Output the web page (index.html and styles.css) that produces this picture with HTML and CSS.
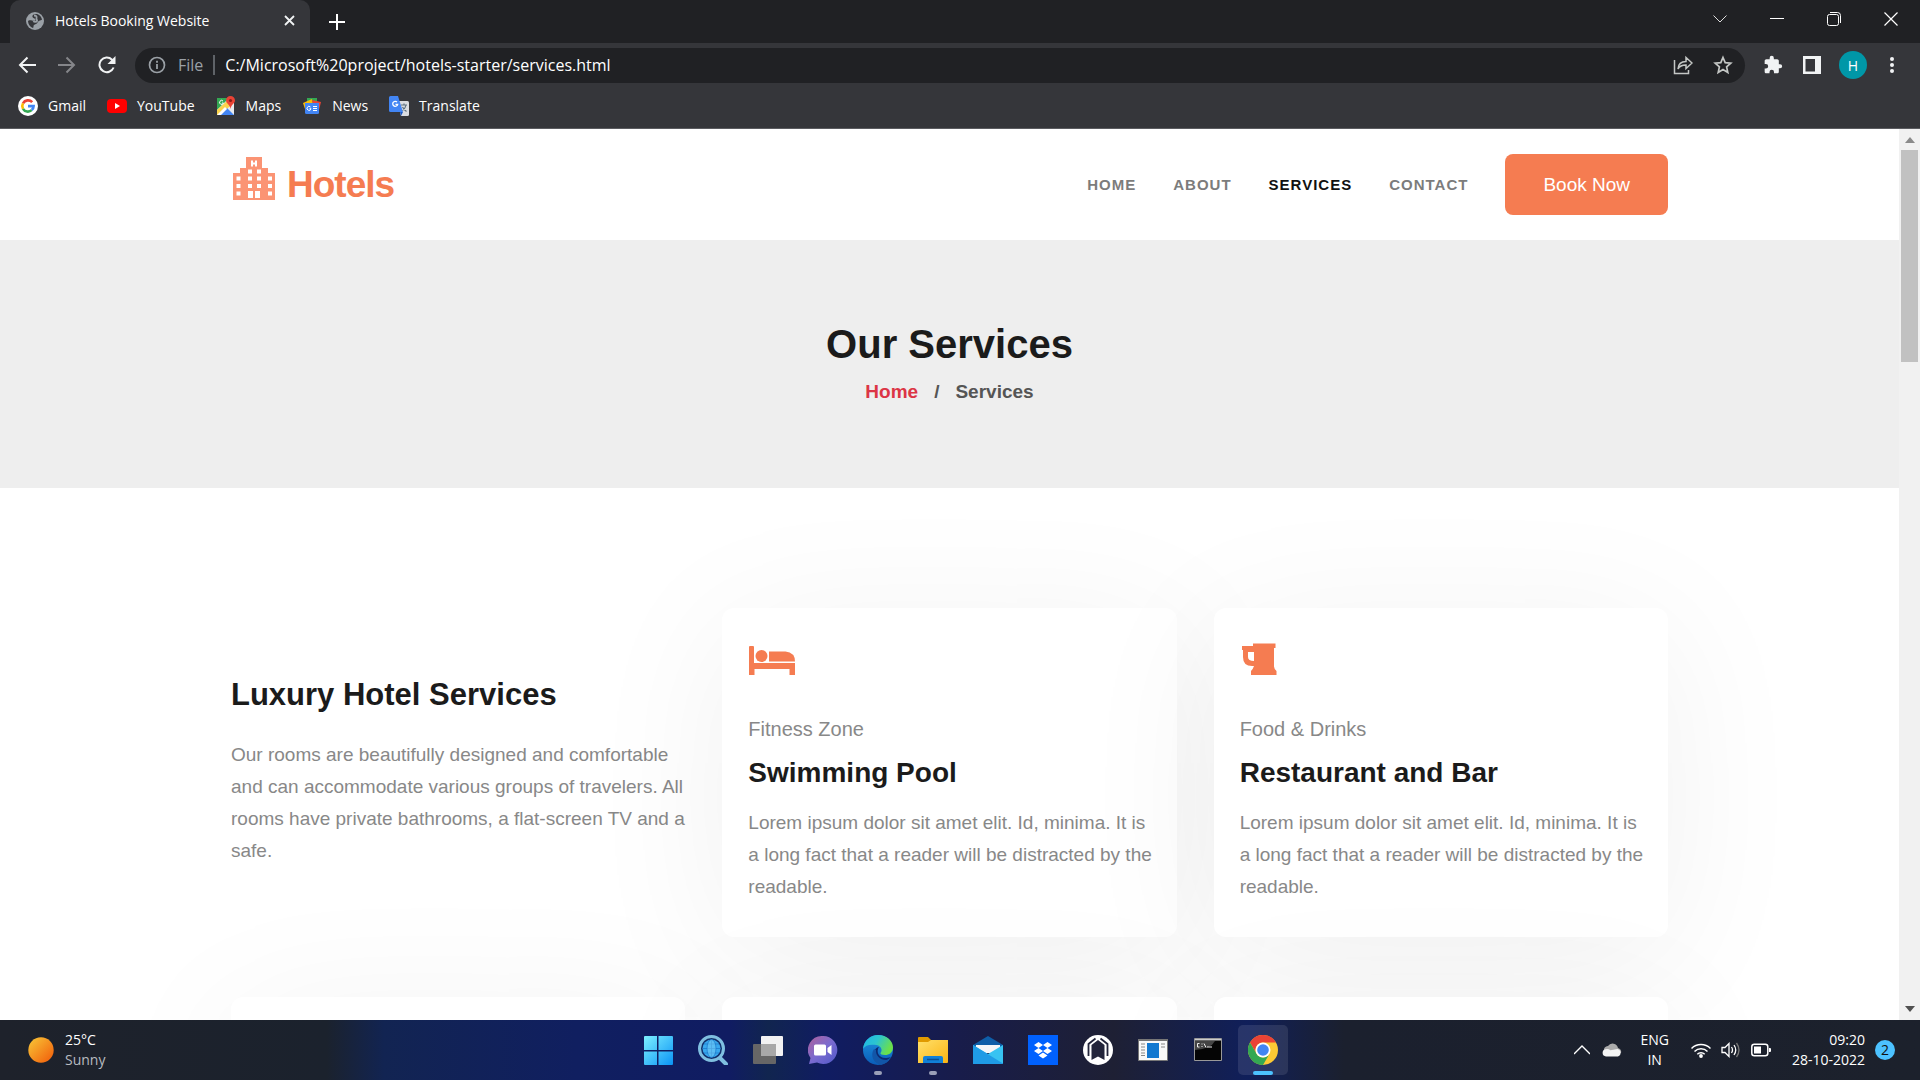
FILE: index.html
```html
<!DOCTYPE html>
<html lang="en">
<head>
<meta charset="utf-8">
<title>Hotels Booking Website</title>
<link rel="stylesheet" href="styles.css">
</head>
<body>
<div class="browser">
  <div class="tabstrip">
    <div class="tab">
      <svg class="tab-icon" viewBox="0 0 18 18"><circle cx="9" cy="9" r="9" fill="#9aa0a6"/><path d="M10 2C7 2 6 3.500 6.500 5S9 6 9.500 7.500 7.500 9 6 8.500 2.500 8 2 9c0 3 2 6 5 7 1-1 0-2 1-3s3-1 3.500-2.500S13 9 14 8.500s2-.5 2-1C15.500 4.500 13 2 10 2z" fill="#35363a"/><path d="M8 3.500c2 0 3 1 2.500 2.500s1 2 .5 3-3 1-3.500 0" fill="none" stroke="#9aa0a6" stroke-width="1.800"/></svg>
      <span class="tab-title">Hotels Booking Website</span>
      <button class="icon-btn" aria-label="Close tab"><svg width="11" height="11" viewBox="0 0 11 11"><path d="M1 1l9 9M10 1l-9 9" stroke="#f1f3f4" stroke-width="1.800"/></svg></button>
    </div>
    <button class="icon-btn new-tab" aria-label="New tab"><svg width="16" height="16" viewBox="0 0 16 16"><path d="M8 0v16M0 8h16" stroke="#fff" stroke-width="2"/></svg></button>
    <div class="window-controls">
      <button class="icon-btn" aria-label="Search tabs"><svg width="14" height="14" viewBox="0 0 14 14"><path d="M.5 3.500l6.500 6.500 6.500-6.500" fill="none" stroke="#ddd"/></svg></button>
      <button class="icon-btn" aria-label="Minimize"><svg width="14" height="14" viewBox="0 0 14 14"><path d="M0 6.500h14" stroke="#fff"/></svg></button>
      <button class="icon-btn" aria-label="Restore"><svg width="14" height="14" viewBox="0 0 14 14"><g fill="none" stroke="#fff"><rect x=".5" y="2.500" width="11" height="11" rx="2"/><path d="M3 .5h7.500a3 3 0 0 1 3 3V11"/></g></svg></button>
      <button class="icon-btn" aria-label="Close"><svg width="14" height="14" viewBox="0 0 14 14"><path d="M.5.5l13 13M13.500.5l-13 13" stroke="#fff" stroke-width="1.200"/></svg></button>
    </div>
  </div>
  <div class="toolbar">
    <div class="nav-buttons">
      <button class="icon-btn" aria-label="Back"><svg width="18" height="18" viewBox="0 0 18 18"><path d="M18 9H2M9.500 1.500L2 9l7.500 7.500" fill="none" stroke="#f1f3f4" stroke-width="2"/></svg></button>
      <button class="icon-btn" aria-label="Forward"><svg width="18" height="18" viewBox="0 0 18 18"><path d="M0 9h16M8.500 1.500L16 9l-7.500 7.500" fill="none" stroke="#85868a" stroke-width="2"/></svg></button>
      <button class="icon-btn" aria-label="Reload"><svg width="18" height="18" viewBox="0 0 18 18"><path d="M15.600 11.500A7.300 7.300 0 1 1 14 3.700L16 6" fill="none" stroke="#f1f3f4" stroke-width="2"/><path d="M17.500 0v8h-8z" fill="#f1f3f4"/></svg></button>
    </div>
    <div class="omnibox">
      <svg width="18" height="18" viewBox="0 0 18 18"><circle cx="9" cy="9" r="7.500" fill="none" stroke="#9aa0a6" stroke-width="1.700"/><path d="M9 8v5M9 4.700v2" stroke="#9aa0a6" stroke-width="1.800"/></svg>
      <label class="scheme" for="url">File</label>
      <input class="url" id="url" type="text" value="C:/Microsoft%20project/hotels-starter/services.html">
      <button class="icon-btn" aria-label="Share"><svg width="20" height="20" viewBox="0 0 20 20"><g fill="none" stroke="#c4c7c5" stroke-width="1.500"><path d="M1.500 5v13.500h14V15"/><path d="M5 14c.3-5 3-7.500 8-7.500V2.500L19 8l-6 5.500V10c-4 0-6.500 1-8 4z"/></g></svg></button>
      <button class="icon-btn" aria-label="Bookmark"><svg width="20" height="20" viewBox="0 0 20 20"><path d="M10 2.500l2.200 5.200 5.600.5-4.200 3.700 1.200 5.500-4.800-2.900-4.800 2.900 1.200-5.500L2.200 8.200l5.600-.5z" fill="none" stroke="#c4c7c5" stroke-width="1.700"/></svg></button>
    </div>
    <div class="tool-actions">
      <button class="icon-btn extensions" aria-label="Extensions"><svg width="20" height="20" viewBox="0 0 24 24"><path fill="#f1f3f4" d="M20.500 11H19V7c0-1.100-.9-2-2-2h-4V3.500a2.500 2.500 0 0 0-5 0V5H4c-1.100 0-2 .9-2 2v3.800h1.500a2.700 2.700 0 0 1 0 5.400H2V20c0 1.100.9 2 2 2h3.800v-1.500a2.700 2.700 0 0 1 5.400 0V22H17c1.100 0 2-.9 2-2v-4h1.500a2.500 2.500 0 0 0 0-5z"/></svg></button>
      <button class="icon-btn" aria-label="Side panel"><svg width="18" height="18" viewBox="0 0 18 18"><path fill="#f1f3f4" fill-rule="evenodd" d="M0 0h18v18H0zM2.500 3v12.500H12V3z"/></svg></button>
      <button class="avatar">H</button>
      <button class="icon-btn" aria-label="Menu"><svg width="4" height="18" viewBox="0 0 4 18"><g fill="#f1f3f4"><circle cx="2" cy="3" r="2"/><circle cx="2" cy="9" r="2"/><circle cx="2" cy="15" r="2"/></g></svg></button>
    </div>
  </div>
  <nav class="bookmarks" aria-label="Bookmarks">
    <a href="#"><svg width="20" height="20" viewBox="0 0 20 20"><circle cx="10" cy="10" r="10" fill="#fff"/><g fill="none" stroke-width="2.600"><path d="M14.200 6.200A5.700 5.700 0 0 0 5 7.300" stroke="#ea4335"/><path d="M5 7.300a5.700 5.700 0 0 0 0 5.500" stroke="#fbbc05"/><path d="M5 12.800a5.700 5.700 0 0 0 8.700 1.300" stroke="#34a853"/><path d="M13.700 14.100a5.500 5.500 0 0 0 1.900-4H10" stroke="#4285f4"/></g></svg>Gmail</a>
    <a href="#"><svg width="20" height="20" viewBox="0 0 20 20"><rect y="3" width="20" height="14" rx="4" fill="#f00"/><path d="M8 7v6l5-3z" fill="#fff"/></svg>YouTube</a>
    <a href="#"><svg width="20" height="20" viewBox="0 0 20 20"><path d="M1 2h17v17H1z" fill="#e8eaed"/><path d="M1 2h12L1 14z" fill="#34a853"/><path d="M1 19V14L11 5l4 4L5 19z" fill="#fbd34c"/><path d="M4 19l7-7 7 7z" fill="#4285f4"/><path d="M1 19l8-8 2 2-6 6z" fill="#fff"/><path d="M14.500 0A4.500 4.500 0 0 0 10 4.500c0 3 4 4 4.500 8.500.5-4.500 4.500-5.500 4.500-8.500A4.500 4.500 0 0 0 14.500 0z" fill="#ea4335"/><circle cx="14.500" cy="4.500" r="1.600" fill="#8c1d18"/><path d="M7 5a2 2 0 1 0 .5 2H6" fill="none" stroke="#fff"/></svg>Maps</a>
    <a href="#"><svg width="20" height="20" viewBox="0 0 20 20"><path d="M5 2h10v6H5z" fill="#34a853"/><path d="M1 7l9-4 1 6-8 4z" fill="#fbbc05"/><path d="M10 4l9 2-2 8h-5z" fill="#ea4335"/><path d="M3 7h14v9.500a1.500 1.500 0 0 1-1.500 1.500h-11A1.500 1.500 0 0 1 3 16.500z" fill="#4285f4"/><path d="M8.500 11a2 2 0 1 0 .5 1.700H7.500M11 10.500h4M11 12.500h4M11 14.500h4" fill="none" stroke="#fff"/></svg>News</a>
    <a href="#"><svg width="20" height="20" viewBox="0 0 20 20"><path d="M8 5h10.500A1.500 1.500 0 0 1 20 6.500v12a1.500 1.500 0 0 1-1.500 1.500H12z" fill="#dadce0"/><path d="M1.500 0H9l5 16H1.500A1.500 1.500 0 0 1 0 14.500v-13A1.500 1.500 0 0 1 1.500 0z" fill="#4285f4"/><path d="M11 16h3l-2 4z" fill="#1a56c4"/><path d="M8 6a2.500 2.500 0 1 0 .7 2.300H6.500" fill="none" stroke="#fff" stroke-width="1.300"/><path d="M12 9h6M15 7.500V9M17 9c-.5 3-2 4.500-3.500 5.500M13.500 11c1 2 2 3 4 4.500" fill="none" stroke="#5f7280" stroke-width="1.200"/></svg>Translate</a>
  </nav>
</div>

<div class="viewport">
  <div class="page">
    <header class="site-header">
      <div class="container header-row">
        <a class="brand" href="#">
          <svg width="44" height="44" viewBox="-1 0 44 44"><path fill="#fb9474" fill-rule="evenodd" d="M14 0h16v11h6v5h7v27H1V16h7v-5h6zM19 3.500v6h2v-2h2v2h2v-6h-2v2h-2v-2zM16 12.500v4h4v-4zM25 12.500v4h4v-4zM4.500 19.500v4h4v-4zM16 19.500v4h4v-4zM25 19.500v4h4v-4zM36 19.500v4h4v-4zM4.500 27v4h4v-4zM16 27v4h4v-4zM25 27v4h4v-4zM36 27v4h4v-4zM4.500 34.500v4h4v-4zM36 34.500v4h4v-4zM16 34v7h5v-7zM23 34v7h5v-7z"/></svg>
          <span>Hotels</span>
        </a>
        <nav class="menu" aria-label="Main">
          <a href="#">HOME</a>
          <a href="#">ABOUT</a>
          <a class="active" href="#">SERVICES</a>
          <a href="#">CONTACT</a>
          <button class="book">Book Now</button>
        </nav>
      </div>
    </header>
    <section class="hero">
      <h1>Our Services</h1>
      <p class="crumbs"><a href="#">Home</a><span>/</span><span>Services</span></p>
    </section>
    <main class="container services">
      <div class="intro">
        <h2>Luxury Hotel Services</h2>
        <p>Our rooms are beautifully designed and comfortable and can accommodate various groups of travelers. All rooms have private bathrooms, a flat-screen TV and a safe.</p>
      </div>
      <article class="card">
        <svg class="card-icon" viewBox="0 0 48 34"><path fill="#f57c51" d="M1 4q0-1 1-1h3q1 0 1 1v16h41v12h-5.500v-6H6.500v6H1z"/><circle cx="13.500" cy="13" r="6" fill="#f57c51"/><path fill="#f57c51" d="M21 8.500h16.500q9.500 1 9.500 10H21z"/><path d="M6.500 19.500H48" stroke="#fff"/></svg>
        <p class="kicker">Fitness Zone</p>
        <h3>Swimming Pool</h3>
        <p class="text">Lorem ipsum dolor sit amet elit. Id, minima. It is a long fact that a reader will be distracted by the readable.</p>
      </article>
      <article class="card">
        <svg class="card-icon" viewBox="0 0 48 34"><path fill="#f57c51" fill-rule="evenodd" d="M2 3h11V.5h22.500V5H34v18.500q0 2 2.500 4.500v4H11v-4q2-2 3-5-11 1-11-9V7H2zM8 9v5q0 4 6 4V9z"/></svg>
        <p class="kicker">Food &amp; Drinks</p>
        <h3>Restaurant and Bar</h3>
        <p class="text">Lorem ipsum dolor sit amet elit. Id, minima. It is a long fact that a reader will be distracted by the readable.</p>
      </article>
      <article class="card"></article>
      <article class="card"></article>
      <article class="card"></article>
    </main>
  </div>
  <div class="scrollbar">
    <svg width="10" height="6" viewBox="0 0 10 6"><path d="M0 6l5-6 5 6z" fill="#8a8a8a"/></svg>
    <div class="track"><div class="thumb"></div></div>
    <svg width="10" height="6" viewBox="0 0 10 6"><path d="M0 0l5 6 5-6z" fill="#505050"/></svg>
  </div>
</div>

<footer class="taskbar">
  <div class="weather">
    <svg width="26" height="26" viewBox="0 0 26 26"><defs><linearGradient id="sun" x1="0" y1="0" x2="1" y2="1"><stop offset=".1" stop-color="#f8be33"/><stop offset=".85" stop-color="#f26a10"/></linearGradient></defs><circle cx="13" cy="13" r="12.700" fill="url(#sun)"/></svg>
    <div><div>25°C</div><div class="dim">Sunny</div></div>
  </div>
  <div class="apps">
    <button class="app" aria-label="Start"><svg width="30" height="30" viewBox="0 0 30 30"><defs><linearGradient id="win" x1="0" y1="0" x2="1" y2="1"><stop offset="0" stop-color="#7df0ff"/><stop offset="1" stop-color="#0a93f5"/></linearGradient></defs><path fill="url(#win)" d="M2 1h12v14H1V2q0-1 1-1zM15.500 1H29q1 0 1 1v13H15.500zM1 16.500h13V30H2q-1 0-1-1zM15.500 16.500H30V29q0 1-1 1H15.500z"/></svg></button>
    <button class="app" aria-label="Search"><svg width="30" height="30" viewBox="0 0 30 30"><path d="M21 22l7 7" stroke="#7fbfe0" stroke-width="4" stroke-linecap="round"/><circle cx="13.500" cy="13.500" r="12" fill="#12306b" stroke="#7fbfe0" stroke-width="3"/><circle cx="13.500" cy="13.500" r="9" fill="#39a9ee"/><path d="M13.500 4.500v18M4.500 13.500h18M6 9h15M6 18h15" stroke="#1a76c9" stroke-width=".7"/><ellipse cx="13.500" cy="13.500" rx="4.500" ry="9" fill="#7dd3fa" fill-opacity=".5" stroke="#1a76c9" stroke-width=".7"/></svg></button>
    <button class="app" aria-label="Task view"><svg width="30" height="30" viewBox="0 0 30 30"><rect x="8" y="1" width="22" height="20" rx="1" fill="#f2f2f2"/><rect x="0" y="9" width="23" height="20" rx="1" fill="#666"/><path d="M8 9h15v12H8z" fill="#a8a8a8"/></svg></button>
    <button class="app" aria-label="Chat"><svg width="30" height="30" viewBox="0 0 30 30"><defs><linearGradient id="chat" x1="0" y1="0" x2="1" y2="1"><stop offset="0" stop-color="#b0609a"/><stop offset=".5" stop-color="#7a6bd0"/><stop offset="1" stop-color="#5058c8"/></linearGradient></defs><path fill="url(#chat)" d="M15 1a14 14 0 1 1-6 26.500L1 29l1.500-6A14 14 0 0 1 15 1z"/><rect x="6" y="9.500" width="12" height="11" rx="1.500" fill="#fff"/><path d="M19.500 13l4-3v10l-4-3z" fill="#fff"/></svg></button>
    <button class="app running" aria-label="Edge"><svg width="30" height="30" viewBox="0 0 30 30"><defs><linearGradient id="ed1" x1="0" y1="0" x2="1" y2=".4"><stop offset="0" stop-color="#1db5e8"/><stop offset=".5" stop-color="#2cc5d0"/><stop offset="1" stop-color="#6be04a"/></linearGradient><linearGradient id="ed2" x1="0" y1="0" x2="0" y2="1"><stop offset="0" stop-color="#1e95e0"/><stop offset="1" stop-color="#0a5cb8"/></linearGradient></defs><circle cx="15" cy="15" r="15" fill="url(#ed2)"/><path d="M0 14C1 5 8 0 15 0c9 0 15 6 15 12.500 0 5-4 7.500-8 7.500-3 0-5-1-4.500-2 2-2 1.500-7-4-8C7 9 2 10 0 14z" fill="url(#ed1)"/><path d="M16 12c-6 0-9 16 8 13 2-1 3-2 4-3-2 .7-4 1-5.500 1C15 23 13 16 16 12z" fill="#0d2a72"/><path d="M11 14c-4 6-1 14 7 16 4-1 7-3 8.500-5.500-8 2-14-3-13.500-9.500z" fill="#1256a8"/></svg></button>
    <button class="app running" aria-label="File Explorer"><svg width="30" height="30" viewBox="0 0 30 30"><defs><linearGradient id="fold" x1="0" y1="0" x2="1" y2="1"><stop offset="0" stop-color="#ffe06a"/><stop offset="1" stop-color="#fbb414"/></linearGradient></defs><path d="M0 3q0-1 1-1h9l3 3v5H0z" fill="#e09a00"/><path d="M0 7h10l3-2h17v22q0 1-1 1H0z" fill="url(#fold)"/><path d="M5 28v-5q0-2 2-2h16q2 0 2 2v5z" fill="#1180d8"/><path d="M9 24.500h12" stroke="#0a4f94" stroke-width="1.500"/></svg></button>
    <button class="app" aria-label="Mail"><svg width="30" height="30" viewBox="0 0 30 30"><path d="M0 10l15-9 15 9v4H0z" fill="#0e5ea8"/><path d="M3 10h24v8H3z" fill="#f4f6f8"/><path d="M0 10l15 9 15-9v18q0 1-1 1H1q-1 0-1-1z" fill="#37c3f2"/><path d="M0 10l30 18.500-1 .5H1q-1 0-1-1z" fill="#1f9be6"/></svg></button>
    <button class="app" aria-label="Dropbox"><svg width="30" height="30" viewBox="0 0 30 30"><path d="M0 0h30v30H0z" fill="#0061fe"/><path fill="#fff" d="M10.500 7l4.500 3-4.500 3L6 10zM19.500 7l4.500 3-4.500 3-4.500-3zM10.500 13l4.500 3-4.500 3L6 16zM19.500 13l4.500 3-4.500 3-4.500-3zM15 17.500l4.500 3-4.500 3-4.500-3z"/></svg></button>
    <button class="app" aria-label="Assistant"><svg width="30" height="30" viewBox="0 0 30 30"><circle cx="15" cy="15" r="15" fill="#fff"/><path d="M15 5l6.500 5v15L15 21.500 8.500 25V10z" fill="#22243a"/><path d="M12.500 3.500L5.500 9v12M17.500 3.500l7 5.500v12" fill="none" stroke="#22243a" stroke-width="1.800"/></svg></button>
    <button class="app" aria-label="Window manager"><svg width="30" height="30" viewBox="0 0 30 30"><path d="M.5 4.500h29v21H.5z" fill="#f8f8f8" stroke="#777"/><path d="M0 4h30v2H0z" fill="#777"/><rect x="9" y="8" width="12" height="15" fill="#1278d0"/><path d="M3 9h4M3 12h4M3 15h4M3 18h4M3 20.500h4M23 9h4M23 12h4" stroke="#888"/></svg></button>
    <button class="app" aria-label="Command Prompt"><svg width="30" height="30" viewBox="0 0 30 30"><path d="M1.500 3.500h27v22h-27z" fill="#050505" stroke="#999"/><path d="M2 4h26v1.500H2z" fill="#ccc"/><path d="M2 6h20q-4 8-20 9z" fill="#444"/><path d="M6.500 8.500h-2v3.500h2M9 8.500v1M9 11v1M11 8.500l2 4M14 12h5" fill="none" stroke="#eee"/></svg></button>
    <button class="app current" aria-label="Chrome"><svg width="30" height="30" viewBox="0 0 30 30"><circle cx="15" cy="15" r="15" fill="#fcc934"/><path d="M2 7.500A15 15 0 0 1 28 7.500H15a7.500 7.500 0 0 0-6.500 11.300z" fill="#ea4335"/><path d="M2 7.500l6.500 11.300A7.500 7.500 0 0 0 21.500 18.800L15 30A15 15 0 0 1 2 7.500z" fill="#34a853"/><circle cx="15" cy="15" r="7.500" fill="#fff"/><circle cx="15" cy="15" r="5.800" fill="#4285f4"/></svg></button>
  </div>
  <div class="tray">
    <svg width="16" height="10" viewBox="0 0 16 10"><path d="M0 9l8-8 8 8" fill="none" stroke="#fff" stroke-width="1.300"/></svg>
    <svg class="cloud" width="20" height="14" viewBox="0 0 20 14"><path d="M2 8a4 4 0 0 1 4-5 5.500 5.500 0 0 1 10 2 4 4 0 0 1 3 5z" fill="#aaa"/><path d="M4 13.500a3.700 3.700 0 0 1-.5-7.300 6 6 0 0 1 5 1l7-1.200a3.900 3.900 0 0 1 .5 7.500z" fill="#f4f4f4"/></svg>
    <div class="lang"><div>ENG</div><div>IN</div></div>
    <div class="status">
      <svg width="20" height="16" viewBox="0 0 20 16"><g fill="none" stroke="#fff" stroke-width="1.500"><path d="M.5 6.500a13.400 13.400 0 0 1 19 0M3.500 9.500a9.200 9.200 0 0 1 13 0M6.300 12.200a5.300 5.300 0 0 1 7.400 0"/></g><circle cx="10" cy="14" r="1.900" fill="#fff"/></svg>
      <svg width="20" height="16" viewBox="0 0 20 16"><g fill="none" stroke="#fff" stroke-width="1.300"><path d="M1 5.500h3L8 1.500v13l-4-4H1zM10.500 5q2 3 0 6M13 3q3.500 5 0 10"/><path d="M15.500 1q5 7 0 14" stroke="#777"/></g></svg>
      <svg width="20" height="14" viewBox="0 0 20 14"><rect x=".8" y="1.300" width="16" height="11.500" rx="2.500" fill="none" stroke="#fff" stroke-width="1.500"/><rect x="3" y="3.500" width="7" height="7" fill="#fff"/><path d="M18 5h1q1 0 1 1v2q0 1-1 1h-1z" fill="#fff"/></svg>
    </div>
    <div class="clock"><div>09:20</div><div>28-10-2022</div></div>
    <span class="count">2</span>
  </div>
</footer>
</body>
</html>
```
FILE: styles.css
```css
* { box-sizing: border-box; }

body {
  margin: 0;
  height: 100vh;
  display: flex;
  flex-direction: column;
  overflow: hidden;
  font-family: "Liberation Sans", Arial, sans-serif;
  background: #fff;
}

h1, h2, h3, p { margin: 0; }
a { color: inherit; text-decoration: none; }
svg { display: block; flex: none; }

button {
  border: 0;
  padding: 0;
  background: none;
  color: inherit;
  font: inherit;
}

.icon-btn {
  display: flex;
  align-items: center;
  justify-content: center;
}

/* Browser window */
.browser {
  flex: none;
  background: #35363a;
  border-bottom: 1px solid #5b5c60;
  color: #fff;
  font-family: "Open Sans", "Noto Sans", sans-serif;
  font-size: 14px;
}

.tabstrip {
  display: flex;
  align-items: center;
  height: 43px;
  padding: 0 22px 0 10px;
  background: #202124;
}

.tab {
  display: flex;
  align-items: center;
  width: 300px;
  height: 43px;
  padding: 0 15px 2px 16px;
  border-radius: 10px 10px 0 0;
  background: #35363a;
}

.tab-icon { width: 18px; height: 18px; }
.tab-title { flex: 1; margin-left: 11px; }
.new-tab { margin-left: 19px; }

.window-controls {
  display: flex;
  gap: 43px;
  margin-left: auto;
  padding-bottom: 6px;
}

.toolbar {
  display: flex;
  align-items: center;
  height: 44px;
  padding: 0 26px 0 18px;
}

.nav-buttons {
  display: flex;
  gap: 22px;
  width: 117px;
}

.omnibox {
  display: flex;
  align-items: center;
  flex: 1;
  height: 35px;
  padding: 0 12px 0 13px;
  border-radius: 18px;
  background: #202124;
  font-size: 16px;
}

.scheme {
  margin-left: 12px;
  padding-right: 10px;
  border-right: 2px solid #5f6368;
  line-height: 20px;
  color: #9aa0a6;
}

.url {
  flex: 1;
  min-width: 0;
  padding: 0 0 0 10px;
  border: 0;
  outline: 0;
  background: none;
  color: #fff;
  font: inherit;
}

.omnibox .icon-btn + .icon-btn { margin-left: 20px; }

.tool-actions {
  display: flex;
  align-items: center;
  gap: 18px;
  margin-left: 18px;
}

.extensions { margin-right: 2px; }

.avatar {
  width: 28px;
  height: 28px;
  border-radius: 50%;
  background: #0097a7;
  font-size: 14px;
}
.avatar + .icon-btn { margin-left: 5px; }

.bookmarks {
  display: flex;
  align-items: center;
  gap: 21px;
  height: 41px;
  padding: 0 18px 4px;
}

.bookmarks a {
  display: flex;
  align-items: center;
  gap: 10px;
}

/* Page area */
.viewport {
  flex: 1;
  min-height: 0;
  display: flex;
}

.page {
  flex: 1;
  min-width: 0;
  overflow: hidden;
}

.container {
  max-width: 1437px;
  margin: 0 auto;
}

.header-row {
  display: flex;
  align-items: center;
  justify-content: space-between;
  height: 111px;
}

.brand {
  display: flex;
  align-items: center;
  gap: 12px;
  color: #f57c51;
  font-size: 37px;
  font-weight: 700;
  letter-spacing: -1px;
}
.brand svg { margin-bottom: 12px; }

.menu {
  display: flex;
  align-items: center;
  gap: 37px;
  color: #7c7c7c;
  font-size: 15px;
  font-weight: 700;
  letter-spacing: 1px;
}
.menu .active { color: #111; }

.book {
  padding: 20px 38px;
  border-radius: 8px;
  background: #f57c51;
  color: #fff;
  font-size: 19px;
  font-weight: 400;
  letter-spacing: normal;
  line-height: 21px;
}

.hero {
  padding: 80px 0;
  background: #eee;
  text-align: center;
}

.hero h1 {
  color: #1b1b1b;
  font-size: 40px;
  line-height: 48px;
}

.crumbs {
  display: flex;
  justify-content: center;
  gap: 16px;
  padding: 12px 0 4px;
  color: #555;
  font-size: 19px;
  font-weight: 700;
  line-height: 24px;
}
.crumbs a { color: #dc3545; }

.services {
  display: grid;
  grid-template-columns: repeat(3, 1fr);
  gap: 60px 37px;
  padding-top: 120px;
}

.intro {
  align-self: center;
  padding-bottom: 4px;
}

.intro h2 {
  margin-bottom: 24px;
  color: #1b1b1b;
  font-size: 31px;
  line-height: 40px;
}

.intro p,
.text {
  color: #888;
  font-size: 19px;
  line-height: 32px;
}

.card {
  min-height: 329px;
  padding: 35px 20px 30px 26px;
  border-radius: 12px;
  background: #fff;
  box-shadow: 0 20px 150px rgba(0, 0, 0, 0.06);
}

.card-icon {
  width: 48px;
  height: 34px;
}

.kicker {
  margin: 32px 0 4px;
  color: #888;
  font-size: 20px;
  line-height: 40px;
}

.card h3 {
  margin-bottom: 14px;
  color: #1b1b1b;
  font-size: 28px;
  line-height: 40px;
}

.scrollbar {
  display: flex;
  flex: none;
  flex-direction: column;
  align-items: center;
  width: 21px;
  padding: 8px 2px;
  background: #f1f1f1;
}

.track {
  flex: 1;
  width: 100%;
  padding: 7px 0;
}

.thumb {
  height: 25%;
  background: #c1c1c1;
}

/* Taskbar */
.taskbar {
  display: grid;
  grid-template-columns: 1fr auto 1fr;
  align-items: center;
  flex: none;
  height: 60px;
  padding: 0 25px;
  background: linear-gradient(90deg, #1e222b 0%, #1b222d 17%, #122452 20%, #101f60 30%, #101c62 38%, #11254f 40%, #101c62 43%, #181c4a 50%, #1e2034 58%, #101f5a 65%, #1b202e 70%, #1c212c 100%);
  color: #fff;
  font-family: "Open Sans", "Noto Sans", sans-serif;
  font-size: 14px;
  line-height: 20px;
}

.weather {
  display: flex;
  align-items: center;
  gap: 11px;
  padding-left: 3px;
}
.dim { color: #b8bbc0; }

.apps {
  display: flex;
  gap: 5px;
}

.app {
  position: relative;
  display: flex;
  align-items: center;
  justify-content: center;
  width: 50px;
  height: 50px;
  border-radius: 5px;
}

.running::after,
.current::after {
  content: "";
  position: absolute;
  bottom: 0;
  width: 8px;
  height: 4px;
  border-radius: 2px;
  background: #9a9fb8;
}

.current { background: rgba(255, 255, 255, 0.1); }
.current::after { width: 20px; background: #4cc2ff; }

.tray {
  display: flex;
  align-items: center;
  justify-content: flex-end;
}
.cloud { margin: 0 18px 0 12px; }
.lang { text-align: center; }

.status {
  display: flex;
  align-items: center;
  gap: 10px;
  margin: 0 21px 0 22px;
}

.clock { text-align: right; }

.count {
  width: 20px;
  height: 20px;
  margin-left: 10px;
  border-radius: 50%;
  background: #4cc2ff;
  color: #111;
  text-align: center;
}
```
